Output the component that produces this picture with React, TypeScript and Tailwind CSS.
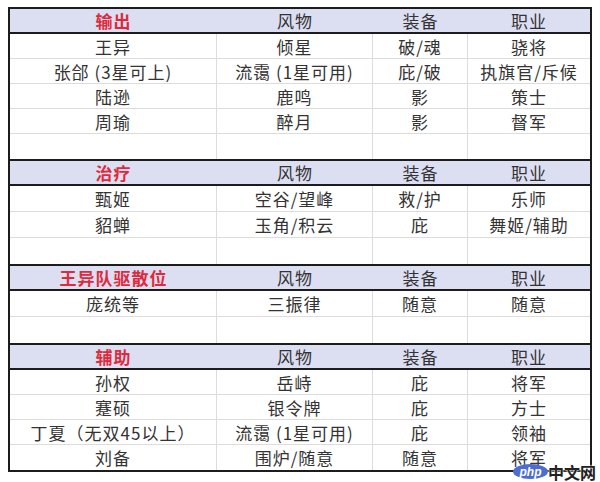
import React from "react";

type Section = {
  title: string;
  rowH: string;
  rows: string[][];
};

const sections: Section[] = [
  {
    title: "输出",
    rowH: "h-[25px]",
    rows: [
      ["王异", "倾星", "破/魂", "骁将"],
      ["张郃 (3星可上)", "流霭 (1星可用)", "庇/破", "执旗官/斥候"],
      ["陆逊", "鹿鸣", "影", "策士"],
      ["周瑜", "醉月", "影", "督军"],
      ["", "", "", ""],
    ],
  },
  {
    title: "治疗",
    rowH: "h-[26px]",
    rows: [
      ["甄姬", "空谷/望峰", "救/护", "乐师"],
      ["貂蝉", "玉角/积云", "庇", "舞姬/辅助"],
      ["", "", "", ""],
    ],
  },
  {
    title: "王异队驱散位",
    rowH: "h-[26px]",
    rows: [
      ["庞统等", "三振律", "随意", "随意"],
      ["", "", "", ""],
    ],
  },
  {
    title: "辅助",
    rowH: "h-[25px]",
    rows: [
      ["孙权", "岳峙", "庇", "将军"],
      ["蹇硕", "银令牌", "庇", "方士"],
      ["丁夏（无双45以上）", "流霭 (1星可用)", "庇", "领袖"],
      ["刘备", "围炉/随意", "随意", "将军"],
    ],
  },
];

const cols = "grid grid-cols-[207px_156px_95px_122px]";

const App = () => {
  return (
    <div
      className="w-[600px] h-[482px] bg-white relative overflow-hidden pt-[7px] pl-[8px]"
      style={{ fontFamily: '"Noto Sans CJK SC", "Noto Sans", sans-serif' }}
    >
      <div className="w-[584px] border-2 border-[#1c1c1c] text-[#333] text-[17px] tracking-[1px]">
        {sections.map((sec, si) => (
          <div
            key={sec.title}
            className={si < sections.length - 1 ? "border-b-2 border-[#1c1c1c]" : ""}
          >
            {/* header */}
            <div className={`${cols} h-[25px] bg-[#dcdff2] border-b-2 border-[#1c1c1c] leading-none`}>
              <div className="flex items-center justify-center text-[#df2a3d] font-bold">{sec.title}</div>
              <div className="flex items-center justify-center">风物</div>
              <div className="flex items-center justify-center">装备</div>
              <div className="flex items-center justify-center">职业</div>
            </div>
            {/* rows */}
            {sec.rows.map((r, ri) => (
              <div
                key={ri}
                className={`${cols} ${sec.rowH} leading-none ${ri < sec.rows.length - 1 ? "border-b border-[#dcdcdc]" : ""}`}
              >
                {r.map((c, ci) => (
                  <div
                    key={ci}
                    className={`flex items-center justify-center whitespace-nowrap ${ci < 3 ? "border-r border-[#dcdcdc]" : ""}`}
                  >
                    {c}
                  </div>
                ))}
              </div>
            ))}
          </div>
        ))}
      </div>

      {/* watermark */}
      <div className="absolute left-[513px] top-[461px] h-[21px] flex items-center">
        <div className="w-[35px] h-[15px] rounded-[50%] bg-[#4d6bd1] flex items-center justify-center">
          <span
            className="text-white text-[12px] italic font-bold leading-none"
            style={{ fontFamily: '"Liberation Sans", sans-serif' }}
          >
            php
          </span>
        </div>
        <span className="text-[#222] text-[16px] font-bold leading-none [text-shadow:0_0_2px_#fff,0_0_2px_#fff]">
          中文网
        </span>
      </div>
    </div>
  );
};

export default App;
